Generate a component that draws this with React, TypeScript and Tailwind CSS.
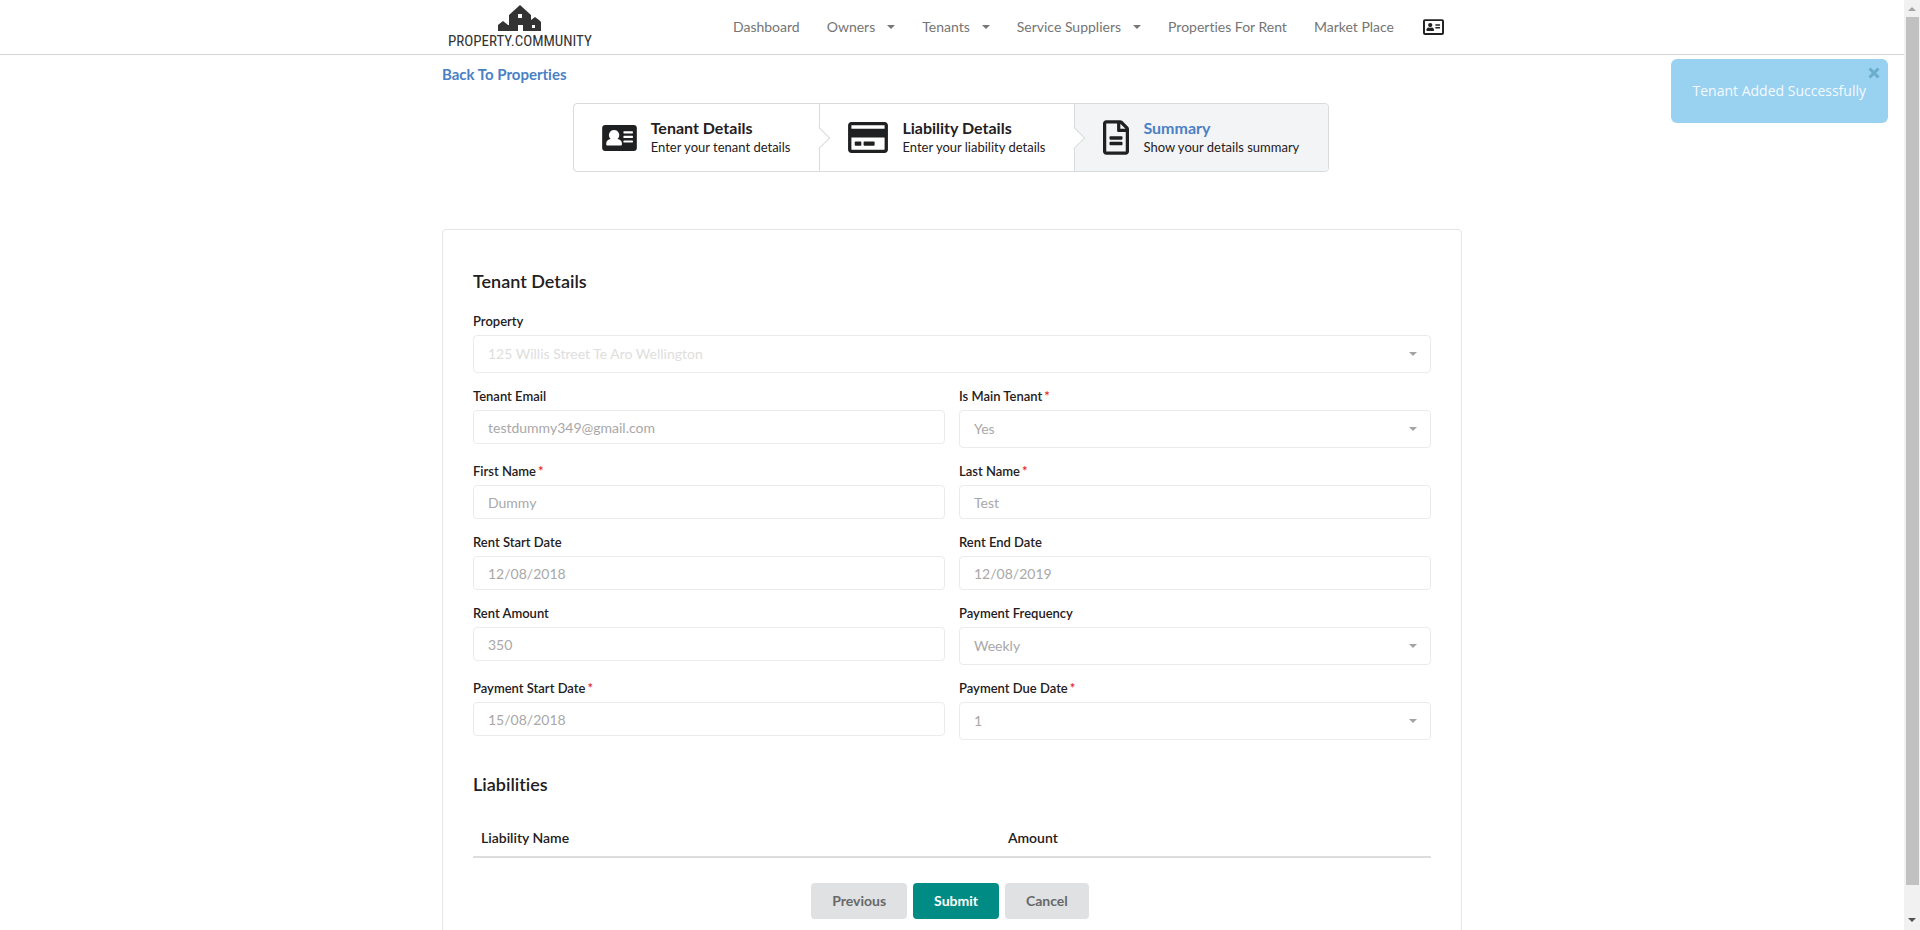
import React, { useId } from "react";

function Caret({ className = "" }: { className?: string }) {
  return (
    <svg viewBox="0 0 8 4" className={`h-1 w-2 ${className}`} fill="currentColor" aria-hidden="true">
      <path d="M0 0h8L4 4z" />
    </svg>
  );
}

function AddressCard({ className = "" }: { className?: string }) {
  return (
    <svg viewBox="0 0 512 384" className={className} fill="currentColor" aria-hidden="true">
      <path
        fillRule="evenodd"
        d="M48 0h416a48 48 0 0 1 48 48v288a48 48 0 0 1-48 48H48a48 48 0 0 1-48-48V48A48 48 0 0 1 48 0zM176 74a76 76 0 0 0-50 133c-40 8-66 32-66 64v17a16 16 0 0 0 16 16h200a16 16 0 0 0 16-16v-17c0-32-26-56-66-64A76 76 0 0 0 176 74zM322 92h124a8 8 0 0 1 8 8v16a8 8 0 0 1-8 8H322a8 8 0 0 1-8-8v-16a8 8 0 0 1 8-8zM322 160h124a8 8 0 0 1 8 8v16a8 8 0 0 1-8 8H322a8 8 0 0 1-8-8v-16a8 8 0 0 1 8-8zM322 228h124a8 8 0 0 1 8 8v16a8 8 0 0 1-8 8H322a8 8 0 0 1-8-8v-16a8 8 0 0 1 8-8z"
      />
    </svg>
  );
}

function AddressCardOutline({ className = "" }: { className?: string }) {
  return (
    <svg viewBox="0 0 512 384" className={className} fill="currentColor" aria-hidden="true">
      <path
        fillRule="evenodd"
        d="M48 0h416a48 48 0 0 1 48 48v288a48 48 0 0 1-48 48H48a48 48 0 0 1-48-48V48A48 48 0 0 1 48 0zM48 48v288h416V48z"
      />
      <circle cx="176" cy="144" r="52" />
      <path d="M80 268c0-34 22-60 56-66 12 8 68 8 80 0 34 6 56 32 56 66 0 12-6 20-18 20H98c-12 0-18-8-18-20z" />
      <rect x="300" y="126" width="116" height="34" rx="8" />
      <rect x="300" y="192" width="116" height="34" rx="8" />
    </svg>
  );
}

function CreditCard() {
  return (
    <svg viewBox="0 0 576 448" className="h-[31px] w-10" fill="currentColor" aria-hidden="true">
      <path d="M527.900 0H48.100C21.500 0 0 21.500 0 48v352c0 26.500 21.500 48 48.100 48h479.800c26.600 0 48.100-21.500 48.100-48V48c0-26.500-21.500-48-48.100-48zM54.100 48h467.800c3.300 0 6 2.700 6 6v42H48.100V54c0-3.300 2.700-6 6-6zm467.800 352H54.100c-3.300 0-6-2.700-6-6V224h479.800v170c0 3.300-2.700 6-6 6zM192 292v40c0 6.600-5.400 12-12 12h-72c-6.600 0-12-5.400-12-12v-40c0-6.600 5.400-12 12-12h72c6.600 0 12 5.400 12 12zm192 0v40c0 6.600-5.400 12-12 12H236c-6.600 0-12-5.400-12-12v-40c0-6.600 5.400-12 12-12h136c6.600 0 12 5.400 12 12z" />
    </svg>
  );
}

function FileOutline() {
  return (
    <svg viewBox="0 0 384 512" className="h-[35px] w-[26px]" fill="currentColor" aria-hidden="true">
      <path d="M288 248v28c0 6.600-5.400 12-12 12H108c-6.600 0-12-5.400-12-12v-28c0-6.600 5.400-12 12-12h168c6.600 0 12 5.400 12 12zm-12 72H108c-6.600 0-12 5.400-12 12v28c0 6.600 5.400 12 12 12h168c6.600 0 12-5.400 12-12v-28c0-6.600-5.400-12-12-12zm108-188.100V464c0 26.500-21.500 48-48 48H48c-26.500 0-48-21.500-48-48V48C0 21.500 21.500 0 48 0h204.100C264.800 0 277 5.100 286 14.100L369.900 98c9 8.900 14.100 21.200 14.100 33.900zm-128-80V128h76.100L256 51.900zM336 464V176H232c-13.300 0-24-10.700-24-24V48H48v416h288z" />
    </svg>
  );
}

function Logo() {
  return (
    <a href="#home" aria-label="Property Community" className="flex flex-col items-center text-[#333]">
      <svg viewBox="0 0 43 26" className="h-[26px] w-[43px]" fill="currentColor" aria-hidden="true">
        <path
          fillRule="evenodd"
          d="M0 26v-6l5-4 5 4h1V10l11-10 11 10v5l4-3 4 3 2 2v9H25v-6h-5v6zM20 9v4h4V9zM34 20v3h3v-3z"
        />
      </svg>
      <span className="mt-0.5 text-[15px] leading-4 [font-family:'Liberation_Sans_Narrow','Roboto_Condensed','Roboto',sans-serif]">
        PROPERTY.COMMUNITY
      </span>
    </a>
  );
}

const navItems = [
  { label: "Dashboard" },
  { label: "Owners", menu: true },
  { label: "Tenants", menu: true },
  { label: "Service Suppliers", menu: true },
  { label: "Properties For Rent" },
  { label: "Market Place" },
];

function Header() {
  return (
    <header className="border-b border-[#d4d4d5]">
      <div className="mx-auto flex h-[54px] max-w-[1020px] items-center justify-between pr-[18px] pl-1.5">
        <Logo />
        <nav className="flex items-center gap-[27px] text-sm text-[#757575]">
          {navItems.map((item) =>
            item.menu ? (
              <button key={item.label} type="button" className="flex items-center gap-3">
                {item.label}
                <Caret className="text-[#777]" />
              </button>
            ) : (
              <a key={item.label} href="#nav">
                {item.label}
              </a>
            ),
          )}
          <a href="#profile" aria-label="Profile" className="pl-0.5 text-[#222]">
            <AddressCardOutline className="h-4 w-[21px]" />
          </a>
        </nav>
      </div>
    </header>
  );
}

const steps = [
  { title: "Tenant Details", text: "Enter your tenant details", icon: <AddressCard className="h-[26px] w-[35px]" /> },
  { title: "Liability Details", text: "Enter your liability details", icon: <CreditCard /> },
  { title: "Summary", text: "Show your details summary", icon: <FileOutline />, active: true },
];

function Steps() {
  return (
    <ol className="flex h-[69px] rounded-sm border border-[#d9dadb]">
      {steps.map((step, i) => (
        <li
          key={step.title}
          aria-current={step.active ? "step" : undefined}
          className={`relative flex items-center gap-3.5 pr-[29px] pl-7 text-[#1f2021] ${
            step.active ? "rounded-r-sm bg-[#f3f4f5]" : "border-r border-[#d9dadb]"
          }`}
        >
          {step.icon}
          <div>
            <div className={`text-base leading-[18px] font-bold ${step.active ? "text-[#4a81c4]" : ""}`}>
              {step.title}
            </div>
            <div className="text-[13px] leading-5">{step.text}</div>
          </div>
          {i < steps.length - 1 && (
            <span className="absolute top-1/2 -right-2 z-10 size-4 -translate-y-1/2 -rotate-45 border-r border-b border-[#d9dadb] bg-white" />
          )}
        </li>
      ))}
    </ol>
  );
}

type FieldProps = { label: string; value: string; required?: boolean; select?: boolean; faded?: boolean; wide?: boolean };

const fields: FieldProps[] = [
  { label: "Property", value: "125 Willis Street Te Aro Wellington", select: true, faded: true, wide: true },
  { label: "Tenant Email", value: "testdummy349@gmail.com" },
  { label: "Is Main Tenant", value: "Yes", select: true, required: true },
  { label: "First Name", value: "Dummy", required: true },
  { label: "Last Name", value: "Test", required: true },
  { label: "Rent Start Date", value: "12/08/2018" },
  { label: "Rent End Date", value: "12/08/2019" },
  { label: "Rent Amount", value: "350" },
  { label: "Payment Frequency", value: "Weekly", select: true },
  { label: "Payment Start Date", value: "15/08/2018", required: true },
  { label: "Payment Due Date", value: "1", select: true, required: true },
];

function Field({ label, value, required, select, faded, wide }: FieldProps) {
  const id = useId();
  return (
    <div className={wide ? "col-span-2" : ""}>
      <label htmlFor={id} className="mb-[5px] block text-[13px] leading-[18px] font-semibold text-[#1f2021]">
        {label}
        {required && <span className="ml-0.5 text-[#db2828]">*</span>}
      </label>
      {select ? (
        <div className="relative">
          <select
            id={id}
            disabled
            defaultValue={value}
            className={`block h-[38px] w-full appearance-none rounded-sm border border-[#ebebec] bg-white px-3.5 text-sm opacity-100 ${
              faded ? "text-[#dedede]" : "text-[#a8a8a8]"
            }`}
          >
            <option>{value}</option>
          </select>
          <Caret className="pointer-events-none absolute top-[17px] right-3.5 text-[#a3a3a3]" />
        </div>
      ) : (
        <input
          id={id}
          disabled
          defaultValue={value}
          className="block h-[34px] w-full rounded-sm border border-[#ebebec] bg-white px-3.5 text-sm text-[#a8a8a8]"
        />
      )}
    </div>
  );
}

function Toast() {
  return (
    <div
      role="status"
      className="absolute top-[59px] right-4 flex h-16 items-center rounded-md bg-[#99d1f0] px-[22px] [font-family:'Open_Sans',sans-serif]"
    >
      <span className="text-sm font-medium text-[#f4faff]">Tenant Added Successfully</span>
      <button type="button" aria-label="Dismiss" className="absolute top-2 right-2 text-[#6badcb]">
        <svg viewBox="0 0 12 12" className="size-3" stroke="currentColor" strokeWidth="3" aria-hidden="true">
          <path d="M1.500 1.500l9 9M10.500 1.500l-9 9" />
        </svg>
      </button>
    </div>
  );
}

function Scrollbar() {
  return (
    <div aria-hidden="true" className="flex w-4 shrink-0 flex-col items-center bg-[#f1f1f1]">
      <div className="flex h-[17px] items-center text-[#a3a3a3]">
        <Caret className="rotate-180" />
      </div>
      <div className="w-[13px] flex-1 bg-[#c1c1c1]" />
      <div className="flex h-[45px] items-end pb-2 text-[#505050]">
        <Caret />
      </div>
    </div>
  );
}

export default function App() {
  return (
    <div className="flex h-screen bg-white [font-family:Lato,sans-serif] [font-variant-ligatures:none]">
      <div className="relative min-w-0 flex-1 overflow-hidden">
        <Header />
        <main className="mx-auto max-w-[1020px]">
          <a href="#properties" className="mt-[9px] block w-fit text-[15px] leading-5 font-bold text-[#4a81c4]">
            Back To Properties
          </a>
          <div className="mt-[19px] flex justify-center pr-0.5">
            <Steps />
          </div>
          <section className="mt-[57px] rounded-sm border border-[#e4e5e6] px-[30px] pt-[39px] pb-14">
            <h2 className="text-lg leading-6 font-semibold text-[#1f2021]">Tenant Details</h2>
            <form onSubmit={(e: React.FormEvent) => e.preventDefault()}>
              <div className="mt-[19px] grid grid-cols-2 gap-x-3.5 gap-y-3.5">
                {fields.map((field) => (
                  <Field key={field.label} {...field} />
                ))}
              </div>
              <h2 className="mt-8 text-lg leading-6 font-semibold text-[#1f2021]">Liabilities</h2>
              <table className="mt-6 w-full text-left text-sm text-[#1f2021]">
                <thead>
                  <tr className="h-[37px] border-b-2 border-[#dcdddd]">
                    <th className="w-[55%] px-2 font-semibold">Liability Name</th>
                    <th className="px-2 font-semibold">Amount</th>
                  </tr>
                </thead>
              </table>
              <div className="mt-[25px] mr-1 flex justify-center gap-1.5 text-sm font-bold">
                <button type="button" className="h-9 rounded-sm bg-[#e0e1e2] px-[21px] text-[#676869]">
                  Previous
                </button>
                <button type="submit" className="h-9 rounded-sm bg-[#008c84] px-[21px] text-white">
                  Submit
                </button>
                <button type="button" className="h-9 rounded-sm bg-[#e0e1e2] px-[21px] text-[#676869]">
                  Cancel
                </button>
              </div>
            </form>
          </section>
        </main>
        <Toast />
      </div>
      <Scrollbar />
    </div>
  );
}
